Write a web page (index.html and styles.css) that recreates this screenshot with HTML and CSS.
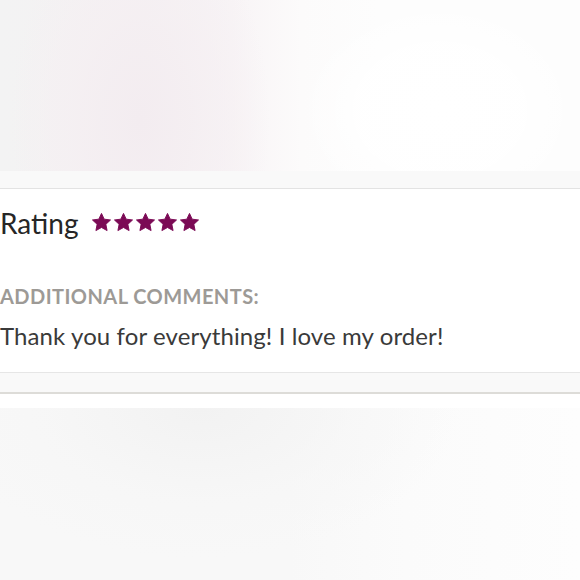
FILE: index.html
```html
<!DOCTYPE html>
<html lang="en">
<head>
<meta charset="utf-8">
<title>Review</title>
<link rel="stylesheet" href="styles.css">
</head>
<body>
<div class="photo photo-top"></div>
<div class="strip strip-top"></div>
<section class="review">
  <div class="rating-row">
    <h2 class="rating-label">Rating</h2>
    <div class="stars" aria-label="5 out of 5 stars">
      <svg class="star" viewBox="0 0 24 24"><path d="M12 0.5L15.41 7.81L23.41 8.79L17.52 14.29L19.05 22.21L12 18.3L4.95 22.21L6.48 14.29L0.59 8.79L8.59 7.81Z"/></svg>
      <svg class="star" viewBox="0 0 24 24"><path d="M12 0.5L15.41 7.81L23.41 8.79L17.52 14.29L19.05 22.21L12 18.3L4.95 22.21L6.48 14.29L0.59 8.79L8.59 7.81Z"/></svg>
      <svg class="star" viewBox="0 0 24 24"><path d="M12 0.5L15.41 7.81L23.41 8.79L17.52 14.29L19.05 22.21L12 18.3L4.95 22.21L6.48 14.29L0.59 8.79L8.59 7.81Z"/></svg>
      <svg class="star" viewBox="0 0 24 24"><path d="M12 0.5L15.41 7.81L23.41 8.79L17.52 14.29L19.05 22.21L12 18.3L4.95 22.21L6.48 14.29L0.59 8.79L8.59 7.81Z"/></svg>
      <svg class="star" viewBox="0 0 24 24"><path d="M12 0.5L15.41 7.81L23.41 8.79L17.52 14.29L19.05 22.21L12 18.3L4.95 22.21L6.48 14.29L0.59 8.79L8.59 7.81Z"/></svg>
    </div>
  </div>
  <h3 class="comments-label">ADDITIONAL COMMENTS:</h3>
  <p class="comments-text">Thank you for everything! I love my order!</p>
</section>
<div class="strip strip-bottom"></div>
<div class="gap"></div>
<div class="photo photo-bottom"></div>
</body>
</html>
```

FILE: styles.css
```css
html, body {
  margin: 0;
  padding: 0;
  background: #ffffff;
  width: 580px;
  height: 580px;
  overflow: hidden;
  font-family: "Lato", "Liberation Sans", sans-serif;
}

.photo-top {
  height: 171px;
  background:
    radial-gradient(ellipse 130px 220px at 140px 120px, rgba(243, 236, 240, 1) 0%, rgba(245, 239, 242, 0.75) 55%, rgba(250, 248, 249, 0) 100%),
    radial-gradient(ellipse 140px 110px at 440px 110px, rgba(255, 255, 255, 1) 0%, rgba(255, 255, 255, 0.8) 60%, rgba(255, 255, 255, 0) 100%),
    linear-gradient(90deg, #f3f3f3 0%, #f4f1f3 25%, #f8f4f6 40%, #fcfbfb 52%, #fdfdfd 65%, #fdfdfd 100%);
}

.strip-top {
  height: 17px;
  background: #f9f9f9;
  border-bottom: 1px solid #e3e3e3;
}

.review {
  display: flex;
  flex-direction: column;
  height: 183px;
}

.rating-row {
  display: flex;
  align-items: center;
  gap: 13px;
  margin-top: 17px;
}

.rating-label {
  margin: 0;
  font-size: 28px;
  font-weight: 400;
  color: #262626;
  line-height: 34px;
}

.stars {
  display: flex;
  gap: 3px;
  margin-top: -1px;
}

.star {
  width: 19px;
  height: 19px;
  fill: #7b0a55;
  stroke: #7b0a55;
  stroke-width: 1.2;
  stroke-linejoin: round;
}

.comments-label {
  margin: 44px 0 0;
  font-size: 20px;
  font-weight: 700;
  color: #9d9a96;
  line-height: 24px;
  letter-spacing: 0.45px;
}

.comments-text {
  margin: 14px 0 0;
  font-size: 24px;
  font-weight: 400;
  color: #3a3a3a;
  line-height: 28px;
  letter-spacing: 0.1px;
}

.strip-bottom {
  height: 19px;
  background: #f9f9f9;
  border-top: 1px solid #e6e6e6;
  border-bottom: 2px solid #dddcd8;
}

.gap {
  height: 14px;
}

.photo-bottom {
  height: 172px;
  background:
    radial-gradient(ellipse 260px 150px at 200px 0px, rgba(242, 242, 242, 1) 0%, rgba(246, 246, 246, 0.6) 60%, rgba(250, 250, 250, 0) 100%),
    linear-gradient(90deg, #f8f8f8 0%, #f8f8f8 50%, #fbfbfb 70%, #fdfdfd 100%);
}
```
